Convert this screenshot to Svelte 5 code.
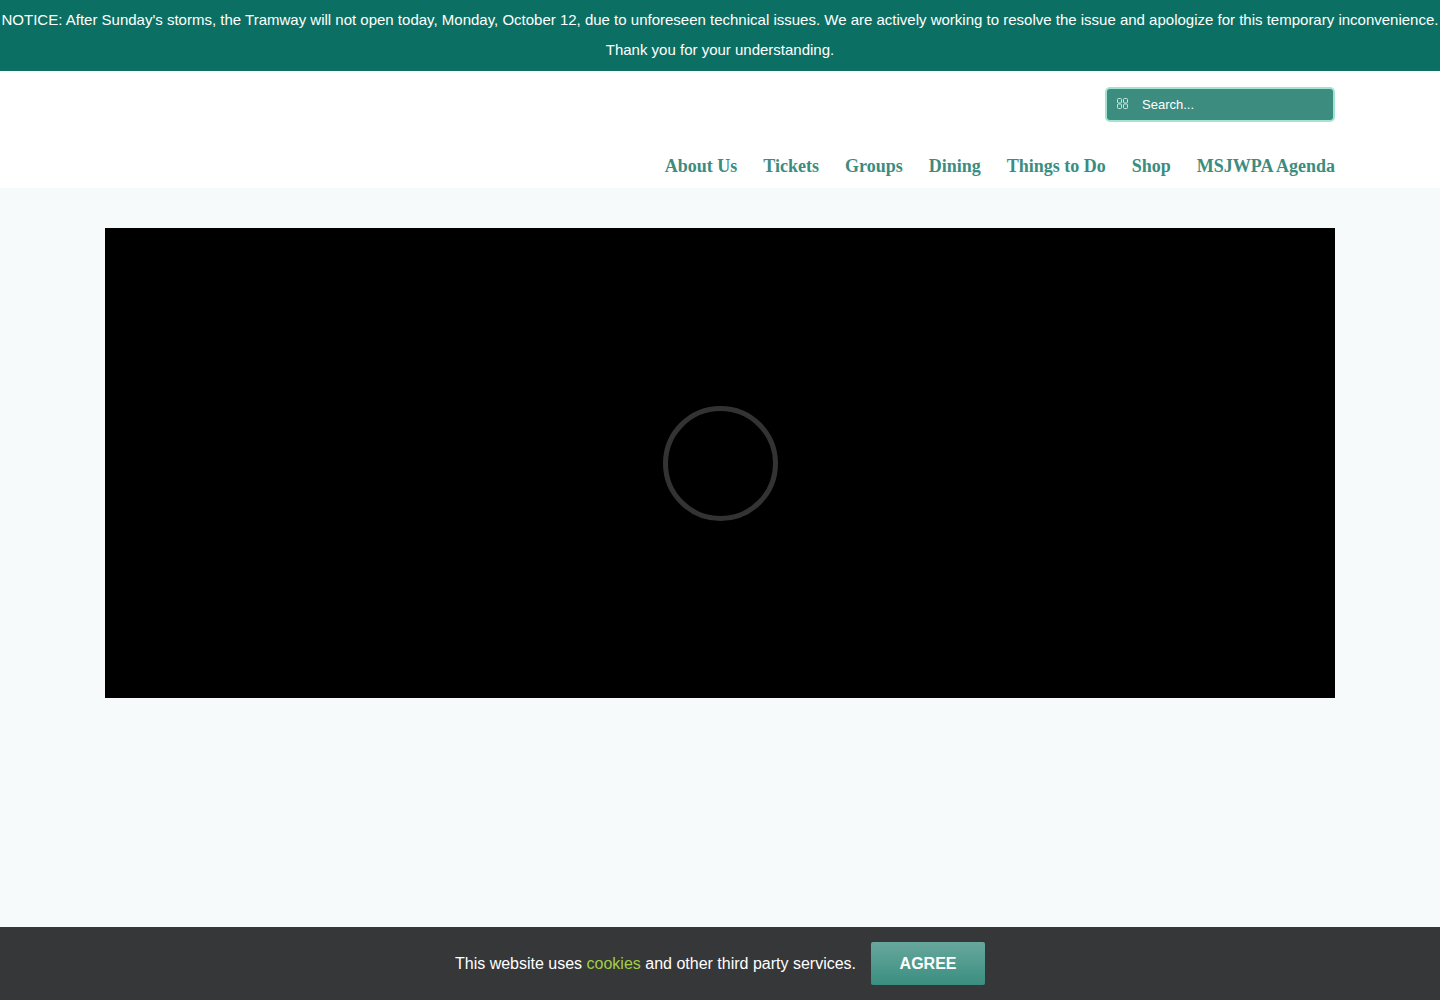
<script lang="ts">
  const links = ["About Us", "Tickets", "Groups", "Dining", "Things to Do", "Shop", "MSJWPA Agenda"];

  let query = $state("");
  let showCookies = $state(true);
</script>

<div class="page">
  <div class="notice" role="status">
    NOTICE: After Sunday's storms, the Tramway will not open today, Monday, October 12, due to unforeseen technical issues. We are actively working to resolve the issue and apologize for this temporary inconvenience. Thank you for your understanding.
  </div>

  <header>
    <div class="container header-inner">
      <label class="search">
        <svg viewBox="0 0 11 13" aria-hidden="true">
          <rect x="0.5" y="0.5" width="4" height="4.5" rx="1" />
          <rect x="6.5" y="0.5" width="4" height="4.5" rx="1" />
          <rect x="0.5" y="6" width="4" height="4.5" rx="1" />
          <rect x="6.5" y="6" width="4" height="4.5" rx="1" />
        </svg>
        <input type="text" placeholder="Search..." aria-label="Search" bind:value={query} />
      </label>
      <nav aria-label="Main">
        <ul>
          {#each links as link}
            <li><a href="#top">{link}</a></li>
          {/each}
        </ul>
      </nav>
    </div>
  </header>

  <main class="container">
    <section class="slider" aria-label="Slideshow">
      <div class="loader"></div>
    </section>
  </main>

  {#if showCookies}
    <div class="cookie-bar">
      <p>This website uses <a href="#cookies">cookies</a> and other third party services.</p>
      <button type="button" onclick={() => (showCookies = false)}>AGREE</button>
    </div>
  {/if}
</div>

<style>
  :global(body) {
    margin: 0;
    background: #f6fafb;
  }

  .page {
    display: flex;
    flex-direction: column;
    min-height: 100vh;
    font-family: "Liberation Sans", Arial, sans-serif;
  }

  .notice {
    padding: 5px 0 6px;
    background: #0b7063;
    color: #fff;
    font-size: 15px;
    line-height: 30px;
    text-align: center;
  }

  header {
    background: #fff;
  }

  .container {
    box-sizing: border-box;
    width: 100%;
    max-width: 1230px;
    margin: 0 auto;
  }

  .header-inner {
    display: flex;
    flex-direction: column;
    align-items: flex-end;
    gap: 32px;
    padding: 16px 0 10px;
  }

  .search {
    box-sizing: border-box;
    display: flex;
    align-items: center;
    gap: 14px;
    width: 230px;
    height: 35px;
    padding: 0 10px;
    border: 2px solid #a3e4d0;
    border-radius: 5px;
    background: #3c8c80;
  }

  .search svg {
    flex: none;
    width: 11px;
    height: 13px;
    fill: none;
    stroke: #c5e8df;
  }

  .search input {
    flex: 1;
    min-width: 0;
    padding: 0;
    border: 0;
    outline: 0;
    background: none;
    color: #fff;
    font: 13px "Liberation Sans", Arial, sans-serif;
  }

  .search input::placeholder {
    color: #fff;
    opacity: 1;
  }

  nav ul {
    display: flex;
    flex-wrap: wrap;
    gap: 26px;
    margin: 0;
    padding: 0;
    list-style: none;
  }

  nav a {
    display: block;
    color: #3c8c80;
    font: bold 18px/24px "Liberation Serif", "Times New Roman", serif;
    text-decoration: none;
  }

  .slider {
    display: grid;
    place-items: center;
    height: 470px;
    margin: 40px 0;
    background: #000;
  }

  .loader {
    box-sizing: border-box;
    width: 115px;
    height: 115px;
    border: 5px solid #333;
    border-radius: 50%;
  }

  .cookie-bar {
    position: sticky;
    bottom: 0;
    display: flex;
    align-items: center;
    justify-content: center;
    gap: 15px;
    margin-top: auto;
    padding: 15px;
    background: #363738;
    color: #fff;
    font-size: 16px;
  }

  .cookie-bar p {
    margin: 0;
  }

  .cookie-bar a {
    color: #a2cf45;
    text-decoration: none;
  }

  .cookie-bar button {
    width: 114px;
    height: 43px;
    padding: 0;
    border: 0;
    border-radius: 2px;
    background: linear-gradient(#68a79d, #3a8e80);
    color: #fff;
    font: bold 16px "Liberation Sans", Arial, sans-serif;
    cursor: pointer;
  }
</style>
